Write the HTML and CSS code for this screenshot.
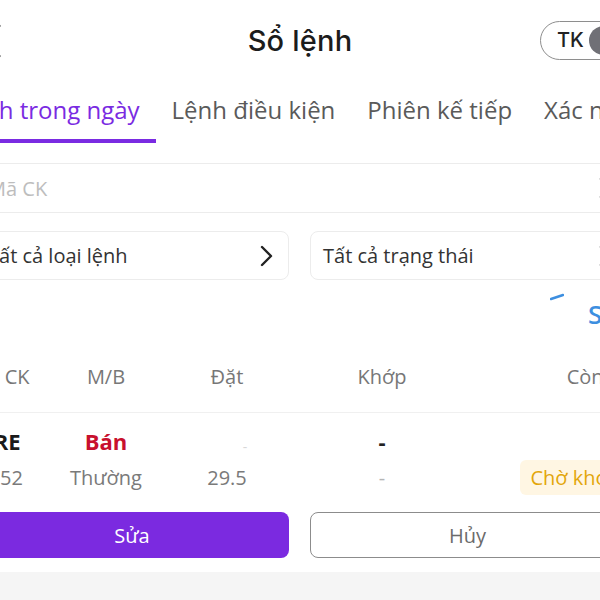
FILE: index.html
```html
<!DOCTYPE html>
<html lang="vi">
<head>
<meta charset="utf-8">
<title>Sổ lệnh</title>
<link rel="stylesheet" href="styles.css">
</head>
<body>
<div class="screen">
  <header class="topbar">
    <div class="back">
      <svg width="26" height="34" viewBox="0 0 26 34"><polyline points="24,2 6,17 24,32" fill="none" stroke="#222" stroke-width="3" stroke-linecap="round" stroke-linejoin="round"/></svg>
    </div>
    <h1 class="title">Sổ lệnh</h1>
    <div class="right">
      <div class="toggle"><span class="tk">TK</span><span class="knob"></span></div>
    </div>
  </header>

  <nav class="tabs">
    <div class="tab active">Lệnh trong ngày</div>
    <div class="tab">Lệnh điều kiện</div>
    <div class="tab">Phiên kế tiếp</div>
    <div class="tab">Xác nhận lệnh</div>
  </nav>

  <section class="filters">
    <div class="field search">
      <span class="placeholder">Mã CK</span>
      <svg class="chev" width="14" height="22" viewBox="0 0 14 22"><polyline points="2,2 11,11 2,20" fill="none" stroke="#222" stroke-width="2.4" stroke-linecap="round" stroke-linejoin="round"/></svg>
    </div>
    <div class="selects">
      <div class="field select">
        <span>Tất cả loại lệnh</span>
        <svg class="chev" width="14" height="22" viewBox="0 0 14 22"><polyline points="2,2 11,11 2,20" fill="none" stroke="#222" stroke-width="2.4" stroke-linecap="round" stroke-linejoin="round"/></svg>
      </div>
      <div class="field select">
        <span>Tất cả trạng thái</span>
        <svg class="chev" width="14" height="22" viewBox="0 0 14 22"><polyline points="2,2 11,11 2,20" fill="none" stroke="#222" stroke-width="2.4" stroke-linecap="round" stroke-linejoin="round"/></svg>
      </div>
    </div>
    <div class="sortrow">
      <svg class="dash" width="14" height="8" viewBox="0 0 14 8"><line x1="1" y1="6" x2="13" y2="2" stroke="#3d8fe0" stroke-width="2.4" stroke-linecap="round"/></svg>
      <span class="sort">Sắp xếp</span>
    </div>
  </section>

  <section class="table">
    <div class="thead">
      <div class="cell c1"><span>Mã CK</span></div>
      <div class="cell c2"><span>M/B</span></div>
      <div class="cell c3"><span>Đặt</span></div>
      <div class="cell c4"><span>Khớp</span></div>
      <div class="cell c5"><span>Còn lại</span></div>
    </div>
    <div class="order">
      <div class="line l1">
        <div class="cell c1 sym"><span>VRE</span></div>
        <div class="cell c2 sell"><span>Bán</span></div>
        <div class="cell c3 faint"><span>-</span></div>
        <div class="cell c4 dash-b"><span>-</span></div>
        <div class="cell c5"></div>
      </div>
      <div class="line l2">
        <div class="cell c1"><span>1052</span></div>
        <div class="cell c2"><span>Thường</span></div>
        <div class="cell c3"><span>29.5</span></div>
        <div class="cell c4 light"><span>-</span></div>
        <div class="cell c5"><span class="badge">Chờ khớp</span></div>
      </div>
      <div class="actions">
        <button class="btn primary">Sửa</button>
        <button class="btn outline">Hủy</button>
      </div>
    </div>
    <div class="band"></div>
  </section>
</div>
</body>
</html>
```
FILE: styles.css
```css
html, body {
  margin: 0;
  padding: 0;
  background: #ffffff;
}
body {
  width: 600px;
  height: 600px;
  overflow: hidden;
  font-family: "Open Sans", "Noto Sans", sans-serif;
  color: #222;
}
.screen {
  width: 700px;
  margin-left: -50px;
}

/* top bar */
.topbar {
  height: 80px;
  display: grid;
  grid-template-columns: 1fr auto 1fr;
  align-items: center;
}
.back {
  display: flex;
  align-items: center;
  padding-left: 25px;
  padding-top: 2px;
}
.title {
  margin: 0;
  font-family: Inter, "Liberation Sans", sans-serif;
  font-weight: 500;
  font-size: 29px;
  color: #1c1c1c;
  letter-spacing: 0.2px;
}
.right {
  display: flex;
  justify-content: flex-end;
  padding-right: 0;
}
.toggle {
  flex: none;
  width: 92px;
  height: 37px;
  border: 1.5px solid #8e8e8e;
  border-radius: 20px;
  display: flex;
  align-items: center;
  padding-left: 16px;
  gap: 5px;
}
.tk {
  font-family: Inter, "Liberation Sans", sans-serif;
  font-weight: 500;
  font-size: 20px;
  color: #222;
}
.knob {
  flex: none;
  width: 29px;
  height: 29px;
  border-radius: 50%;
  background: #707076;
}

/* tabs */
.tabs {
  display: flex;
  height: 63px;
  margin-left: -8px;
  white-space: nowrap;
}
.tab {
  flex: none;
  padding: 0 16px;
  display: flex;
  align-items: center;
  font-size: 24px;
  color: #5a5a5a;
  border-bottom: 4px solid transparent;
  box-sizing: border-box;
}
.tab.active {
  color: #7a2be2;
  border-bottom-color: #7a2be2;
}

/* filters */
.filters {
  padding: 20px 25px 0;
}
.field {
  box-sizing: border-box;
  border: 1px solid #ececec;
  border-radius: 8px;
  display: flex;
  align-items: center;
  justify-content: space-between;
  padding: 0 12px;
  font-size: 20px;
  color: #333;
}
.search {
  height: 50px;
}
.placeholder {
  color: #bdbdbd;
}
.selects {
  margin-top: 18px;
  display: grid;
  grid-template-columns: 314px 315px;
  gap: 21px;
}
.select {
  height: 49px;
}
.chev {
  flex: none;
  margin-right: 2px;
}
.search .chev, .selects .select:last-child .chev {
  margin-right: -1px;
}
.sortrow {
  height: 60px;
  display: flex;
  align-items: flex-start;
  padding-left: 575px;
  white-space: nowrap;
}
.dash {
  flex: none;
  margin-top: 13px;
}
.sort {
  flex: none;
  margin-left: 24px;
  margin-top: 18px;
  font-size: 26px;
  font-weight: 600;
  color: #3d8fe0;
  line-height: 32px;
}

/* table */
.thead, .line {
  display: grid;
  grid-template-columns: 50px 162px 80px 230px 133px;
  padding: 0 25px;
  align-items: center;
}
.cell {
  display: flex;
  justify-content: center;
  white-space: nowrap;
}
.cell.c5 {
  justify-content: flex-end;
}
.thead {
  height: 71px;
  border-bottom: 1px solid #f0f0f0;
  font-size: 20px;
  color: #777;
  padding-top: 1px;
}
.order {
  padding-top: 13px;
}
.line.l1 {
  height: 30px;
  font-size: 22px;
}
.sym {
  font-weight: 700;
  color: #1a1a1a;
}
.sell {
  font-weight: 700;
  color: #c8102e;
}
.faint {
  color: #d8d8d8;
  font-size: 14px;
  padding-top: 10px;
  padding-left: 36px;
}
.dash-b {
  font-weight: 700;
  color: #222;
}
.line.l2 {
  margin-top: 4px;
  height: 35px;
  font-size: 20px;
  color: #7a7a7a;
}
.light {
  color: #b5b5b5;
}
.badge {
  display: inline-block;
  height: 35px;
  line-height: 35px;
  padding: 0 10px;
  border-radius: 6px;
  background: #fff6e3;
  color: #e3a60a;
  font-size: 20px;
}
.actions {
  margin-top: 17px;
  padding: 0 25px;
  display: grid;
  grid-template-columns: 314px 315px;
  gap: 21px;
}
.btn {
  height: 46px;
  border-radius: 8px;
  font-family: "Open Sans", "Noto Sans", sans-serif;
  font-size: 20px;
  cursor: pointer;
}
.btn.primary {
  background: #7b2ae0;
  border: none;
  color: #ffffff;
  font-weight: 500;
}
.btn.outline {
  background: #ffffff;
  border: 1.5px solid #8c8c8c;
  color: #6b6b6b;
}
.band {
  margin-top: 14px;
  height: 40px;
  background: #f5f5f5;
}
```
